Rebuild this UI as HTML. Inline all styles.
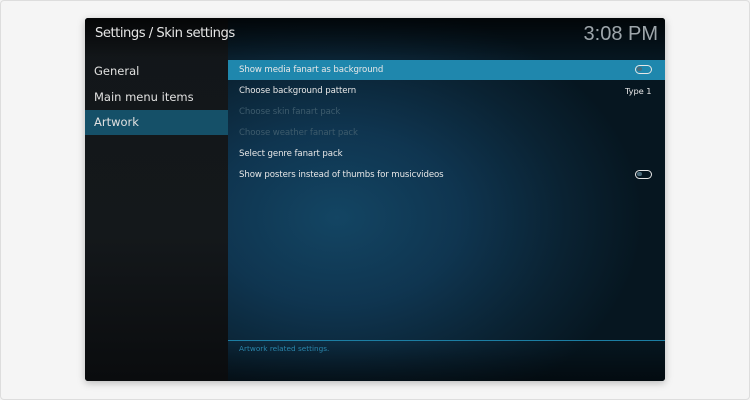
<!DOCTYPE html>
<html><head><meta charset="utf-8"><style>
*{margin:0;padding:0;box-sizing:border-box}
body{width:750px;height:400px;background:#f4f4f4;font-family:"DejaVu Sans","Liberation Sans",sans-serif;overflow:hidden;position:relative}
.outer{position:absolute;left:0;top:0;width:750px;height:400px;border:1px solid #ddd;border-radius:4px;background:#f5f5f5}
.win{position:absolute;left:85px;top:18px;width:580px;height:363px;border-radius:3px;overflow:hidden;background:#0d1115;box-shadow:0 2px 8px rgba(0,0,0,.25)}
.left{position:absolute;left:0;top:0;width:143px;height:363px;background:linear-gradient(#121619,#14181b 60%,#0a0c0e)}
.right{position:absolute;left:143px;top:0;width:437px;height:363px;background:radial-gradient(ellipse 70% 60% at 25% 55%,#134563 0%,#0f3550 40%,#0a2232 75%,#061620 100%)}
.hdr{position:absolute;left:0;top:0;width:580px;height:40px;background:linear-gradient(rgba(0,0,0,.75),rgba(0,0,0,0))}
.title{position:absolute;left:10px;top:8px;color:#e6e6e6;font-size:13.2px;letter-spacing:-0.5px}
.clock{position:absolute;right:7px;top:5px;color:#9ea6ab;font-size:20px;font-family:"Liberation Sans",sans-serif}
.li{position:absolute;left:9px;color:#e0e0e0;font-size:11.5px}
.sel{position:absolute;left:0;top:92px;width:143px;height:25px;background:#155068}
.row{position:absolute;left:154px;font-size:8.6px;color:#e8e8e8;letter-spacing:-0.1px}
.hl{position:absolute;left:143px;top:42px;width:437px;height:20px;background:#1f87ad}
.dim{color:#3d5b6c}
.tog{position:absolute;width:17px;height:9px;border:1.3px solid #e6e6e6;border-radius:5px}
.tog::after{content:"";position:absolute;left:1px;top:1px;width:5px;height:4px;border-radius:2px;background:#4a6a7a}
.foot{position:absolute;left:143px;top:322px;width:437px;height:1px;background:#1c7ea3}
.ft{position:absolute;left:154px;top:326px;font-size:7.3px;color:#2a86ac}
.bot{position:absolute;left:143px;top:323px;width:437px;height:40px;background:linear-gradient(rgba(0,0,0,0),rgba(0,0,0,.5))}
</style></head><body>
<div class="outer"></div>
<div class="win">
<div class="left"></div>
<div class="right"></div>
<div class="bot"></div>
<div class="hdr"></div>
<div class="title">Settings / Skin settings</div>
<div class="clock">3:08 PM</div>
<div class="sel"></div>
<div class="li" style="top:46px">General</div>
<div class="li" style="top:72px">Main menu items</div>
<div class="li" style="top:97px">Artwork</div>
<div class="hl"></div>
<div class="row" style="top:47px">Show media fanart as background</div>
<div class="tog" style="left:550px;top:47px"></div>
<div class="row" style="top:68px">Choose background pattern</div>
<div class="row" style="top:68px;left:540px;font-size:8.3px">Type 1</div>
<div class="row dim" style="top:89px">Choose skin fanart pack</div>
<div class="row dim" style="top:110px">Choose weather fanart pack</div>
<div class="row" style="top:131px">Select genre fanart pack</div>
<div class="row" style="top:152px">Show posters instead of thumbs for musicvideos</div>
<div class="tog" style="left:550px;top:152px"></div>
<div class="foot"></div>
<div class="ft">Artwork related settings.</div>
</div>
</body></html>
